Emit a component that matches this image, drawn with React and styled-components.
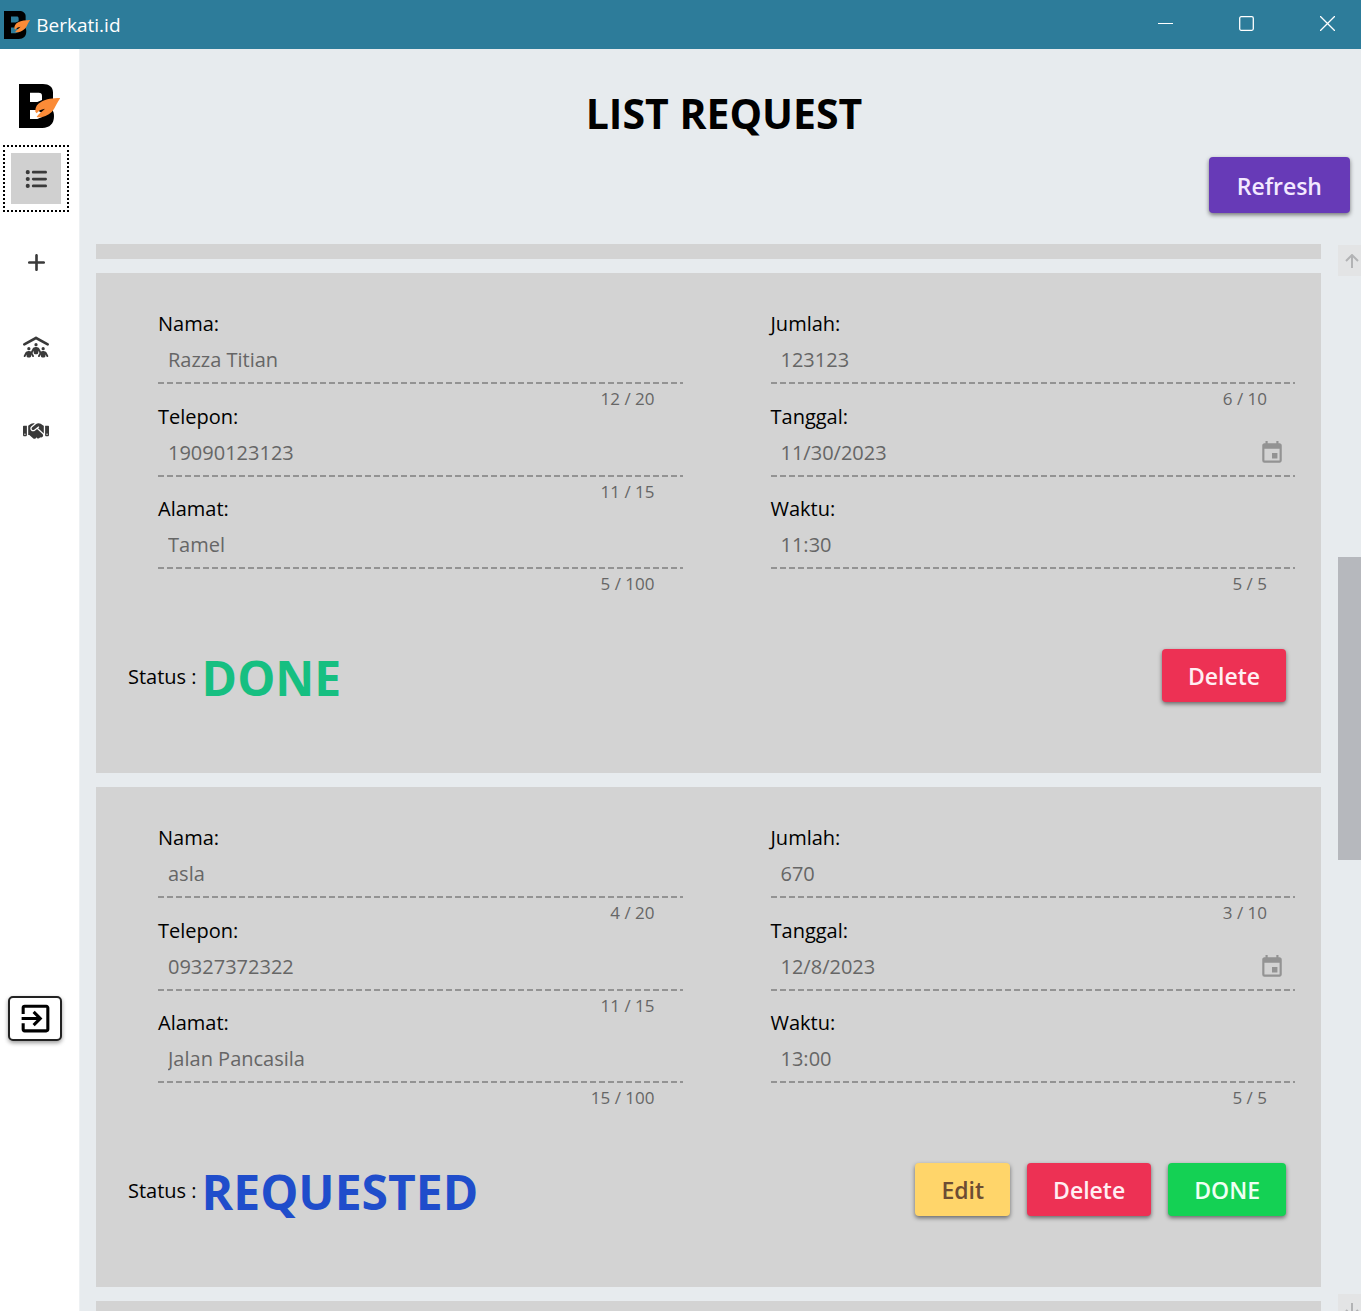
import React from "react";
import styled, { createGlobalStyle } from "styled-components";
import { FaPeopleRoof, FaHandshake, FaListUl, FaPlus } from "react-icons/fa6";
import { MdExitToApp, MdEvent } from "react-icons/md";

const Global = createGlobalStyle`
  *, *::before, *::after { box-sizing: border-box; }
  body { margin: 0; font-family: "Open Sans", "Noto Sans", sans-serif; color: #000; }
  h1, p { margin: 0; }
  button, input { font-family: inherit; }
`;

const Window = styled.div`
  display: flex;
  flex-direction: column;
  height: 100vh;
  overflow: hidden;
  background: #e7ebee;
`;

const TitleBar = styled.header`
  display: flex;
  align-items: center;
  flex: none;
  height: 49px;
  padding-left: 4px;
  gap: 6px;
  background: #2d7c9a;
  color: #fff;
  font-size: 19px;
`;

const WindowControls = styled.div`
  display: flex;
  align-self: stretch;
  margin-left: auto;
`;

const WindowButton = styled.button`
  display: grid;
  place-items: center;
  width: 81px;
  padding: 0 0 2px 14px;
  border: 0;
  background: none;
  color: #fff;
`;

const Body = styled.div`
  display: flex;
  flex: 1;
  min-height: 0;
`;

const Sidebar = styled.nav`
  display: flex;
  flex-direction: column;
  flex: none;
  width: 80px;
  padding: 35px 0 270px 3px;
  background: #fff;
  border-right: 1px solid #eef1f3;
`;

const Brand = styled.div`
  display: flex;
  padding-left: 16px;
  margin-bottom: 17px;
`;

const NavItem = styled.button`
  display: grid;
  place-items: center;
  flex: none;
  width: 66px;
  height: 67px;
  margin-bottom: 17px;
  padding: 6px;
  border: 2px dotted ${(p) => (p.$active ? "#000" : "transparent")};
  background: ${(p) => (p.$active ? "#d0d0d0" : "transparent")} content-box;
  color: #3a3a3a;
`;

const ExitButton = styled.button`
  display: grid;
  place-items: center;
  width: 54px;
  height: 45px;
  margin-top: auto;
  margin-left: 5px;
  padding: 0;
  border: 2px solid #222;
  border-radius: 5px;
  background: #fff;
  color: #000;
  box-shadow: 0 2px 4px rgba(0, 0, 0, 0.4);
`;

const Main = styled.main`
  display: flex;
  flex-direction: column;
  flex: 1;
  min-width: 0;
`;

const Heading = styled.h1`
  padding: 35px 0 0 7px;
  text-align: center;
  font-size: 41px;
  line-height: 58px;
  font-weight: 700;
`;

const Toolbar = styled.div`
  display: flex;
  justify-content: flex-end;
  padding: 15px 11px 31px 0;
`;

const tones = {
  purple: ["#673ab7", "#f3e9ff"],
  red: ["#ed3154", "#ffeef2"],
  yellow: ["#ffd56a", "#6d4c33"],
  green: ["#14d154", "#effff3"],
};

const Button = styled.button`
  height: ${(p) => (p.$large ? 56 : 53)}px;
  padding: 2px ${(p) => (p.$large ? 28 : 26)}px 0;
  border: 0;
  border-radius: 4px;
  background: ${(p) => tones[p.$tone][0]};
  color: ${(p) => tones[p.$tone][1]};
  font-size: 23px;
  font-weight: 600;
  white-space: nowrap;
  box-shadow: 0 2px 4px rgba(0, 0, 0, 0.5);
`;

const Scroller = styled.div`
  display: flex;
  flex: 1;
  min-height: 0;
  gap: 17px;
  padding-left: 16px;
`;

const List = styled.div`
  display: flex;
  flex-direction: column;
  flex: 1;
  min-width: 0;
  gap: 14px;
  overflow: hidden;
`;

const CardEdge = styled.div`
  flex: none;
  height: 15px;
  background: #d3d3d3;
`;

const Card = styled.article`
  flex: none;
  height: 500px;
  padding-top: 37px;
  background: #d3d3d3;
`;

const Fields = styled.div`
  display: grid;
  grid-template-columns: 1fr 1fr;
  grid-template-rows: repeat(3, 1fr);
  height: 278px;
`;

const FieldBox = styled.div`
  display: flex;
  flex-direction: column;
  min-height: 0;
  padding: 0 26px 0 62px;
`;

const Label = styled.label`
  flex: none;
  font-size: 20px;
  line-height: 28px;
`;

const InputRow = styled.div`
  display: flex;
  align-items: center;
  flex: none;
  height: 47px;
  padding: 0 10px 3px;
  background:
    repeating-linear-gradient(90deg, #939393 0 6px, transparent 6px 9px) left bottom 1px / 100% 2px no-repeat;
  color: #939393;
`;

const Input = styled.input`
  flex: 1;
  min-width: 0;
  padding: 0;
  border: 0;
  background: none;
  color: #666;
  font-size: 20px;
  line-height: 28px;
`;

const Counter = styled.span`
  flex: none;
  padding-right: 28px;
  text-align: right;
  color: #666;
  font-size: 17px;
  line-height: 28px;
`;

const CardFooter = styled.footer`
  display: flex;
  align-items: center;
  height: 60px;
  margin-top: 57px;
  padding: 0 35px 0 32px;
`;

const Status = styled.p`
  display: flex;
  align-items: center;
  gap: 5px;
  padding-top: 2px;
  font-size: 20px;
`;

const StatusValue = styled.strong`
  padding-top: 4px;
  color: ${(p) => p.$color};
  font-size: 48px;
  line-height: 60px;
`;

const Actions = styled.div`
  display: flex;
  gap: 17px;
  margin-left: auto;
`;

const ScrollBar = styled.div`
  display: flex;
  flex-direction: column;
  flex: none;
  width: 23px;
  margin-bottom: -14px;
  padding-top: 1px;
  overflow: hidden;
`;

const ScrollArrow = styled.button`
  display: grid;
  place-items: center;
  flex: none;
  width: 28px;
  height: 31px;
  padding: 0;
  border: 0;
  background: #e3e4e5;
  color: #b2b3b5;
`;

const ScrollTrack = styled.div`
  flex: 1;
  padding-top: 281px;
`;

const ScrollThumb = styled.div`
  height: 303px;
  background: #b6b8bd;
`;

function Logo({ height }) {
  return (
    <svg height={height} viewBox="0 0 124 132" aria-hidden="true">
      <path
        fill="#000"
        fillRule="evenodd"
        d="M0 0h72c18 0 30 9 30 25v20l-4 30c6 7 7 13 7 22 0 22-13 35-35 35H0zM33 26v28h22l14-6V36c0-7-3-10-10-10zM33 78v27h22l14-6V88l-14-10z"
      />
      <path
        fill="#fb8b37"
        d="M124 42c-21 0-43 3-57 11-13 7-19 16-18 30l4 5c6-8 12-12 25-14-8 8-18 14-25 24l2 2h13c16-4 29-12 37-25 5-9 10-20 19-33z"
      />
    </svg>
  );
}

function ArrowIcon({ down }) {
  return (
    <svg width="14" height="14" viewBox="0 0 14 14" fill="none" stroke="currentColor" strokeWidth="2" aria-hidden="true">
      <path d={down ? "M7 0v13M1 7l6 6 6-6" : "M7 14V1M1 7l6-6 6 6"} />
    </svg>
  );
}

function Field({ id, label, value, max, date }) {
  return (
    <FieldBox>
      <Label htmlFor={id}>{label}:</Label>
      <InputRow>
        <Input id={id} value={value} readOnly />
        {date && <MdEvent size={26} />}
      </InputRow>
      {max && <Counter>{value.length} / {max}</Counter>}
    </FieldBox>
  );
}

function RequestCard({ id, request, status, color, children }) {
  return (
    <Card>
      <Fields>
        <Field id={`${id}-nama`} label="Nama" value={request.nama} max={20} />
        <Field id={`${id}-jumlah`} label="Jumlah" value={request.jumlah} max={10} />
        <Field id={`${id}-telepon`} label="Telepon" value={request.telepon} max={15} />
        <Field id={`${id}-tanggal`} label="Tanggal" value={request.tanggal} date />
        <Field id={`${id}-alamat`} label="Alamat" value={request.alamat} max={100} />
        <Field id={`${id}-waktu`} label="Waktu" value={request.waktu} max={5} />
      </Fields>
      <CardFooter>
        <Status>
          Status : <StatusValue $color={color}>{status}</StatusValue>
        </Status>
        <Actions>{children}</Actions>
      </CardFooter>
    </Card>
  );
}

const first = { nama: "Razza Titian", jumlah: "123123", telepon: "19090123123", tanggal: "11/30/2023", alamat: "Tamel", waktu: "11:30" };
const second = { nama: "asla", jumlah: "670", telepon: "09327372322", tanggal: "12/8/2023", alamat: "Jalan Pancasila", waktu: "13:00" };

export default function App() {
  return (
    <Window>
      <Global />
      <TitleBar>
        <Logo height={28} />
        <span>Berkati.id</span>
        <WindowControls>
          <WindowButton aria-label="Minimize">
            <svg width="15" height="15" viewBox="0 0 15 15" stroke="currentColor"><path d="M0 7.500h15" /></svg>
          </WindowButton>
          <WindowButton aria-label="Maximize">
            <svg width="15" height="15" viewBox="0 0 15 15" fill="none" stroke="currentColor" strokeWidth="1.300"><rect x="0.700" y="0.700" width="13.600" height="13.600" rx="1.500" /></svg>
          </WindowButton>
          <WindowButton aria-label="Close">
            <svg width="15" height="15" viewBox="0 0 15 15" stroke="currentColor" strokeWidth="1.300"><path d="M0 0l15 15M15 0L0 15" /></svg>
          </WindowButton>
        </WindowControls>
      </TitleBar>
      <Body>
        <Sidebar>
          <Brand><Logo height={44} /></Brand>
          <NavItem $active aria-label="List request"><FaListUl size={22} /></NavItem>
          <NavItem aria-label="Add request"><FaPlus size={21} /></NavItem>
          <NavItem aria-label="Community"><FaPeopleRoof size={26} /></NavItem>
          <NavItem aria-label="Partners"><FaHandshake size={26} /></NavItem>
          <ExitButton aria-label="Exit"><MdExitToApp size={37} /></ExitButton>
        </Sidebar>
        <Main>
          <Heading>LIST REQUEST</Heading>
          <Toolbar><Button $tone="purple" $large>Refresh</Button></Toolbar>
          <Scroller>
            <List>
              <CardEdge />
              <RequestCard id="first" request={first} status="DONE" color="#16bf81">
                <Button $tone="red">Delete</Button>
              </RequestCard>
              <RequestCard id="second" request={second} status="REQUESTED" color="#1f4dcb">
                <Button $tone="yellow">Edit</Button>
                <Button $tone="red">Delete</Button>
                <Button $tone="green">DONE</Button>
              </RequestCard>
              <CardEdge />
            </List>
            <ScrollBar>
              <ScrollArrow aria-label="Scroll up"><ArrowIcon /></ScrollArrow>
              <ScrollTrack><ScrollThumb /></ScrollTrack>
              <ScrollArrow aria-label="Scroll down"><ArrowIcon down /></ScrollArrow>
            </ScrollBar>
          </Scroller>
        </Main>
      </Body>
    </Window>
  );
}
